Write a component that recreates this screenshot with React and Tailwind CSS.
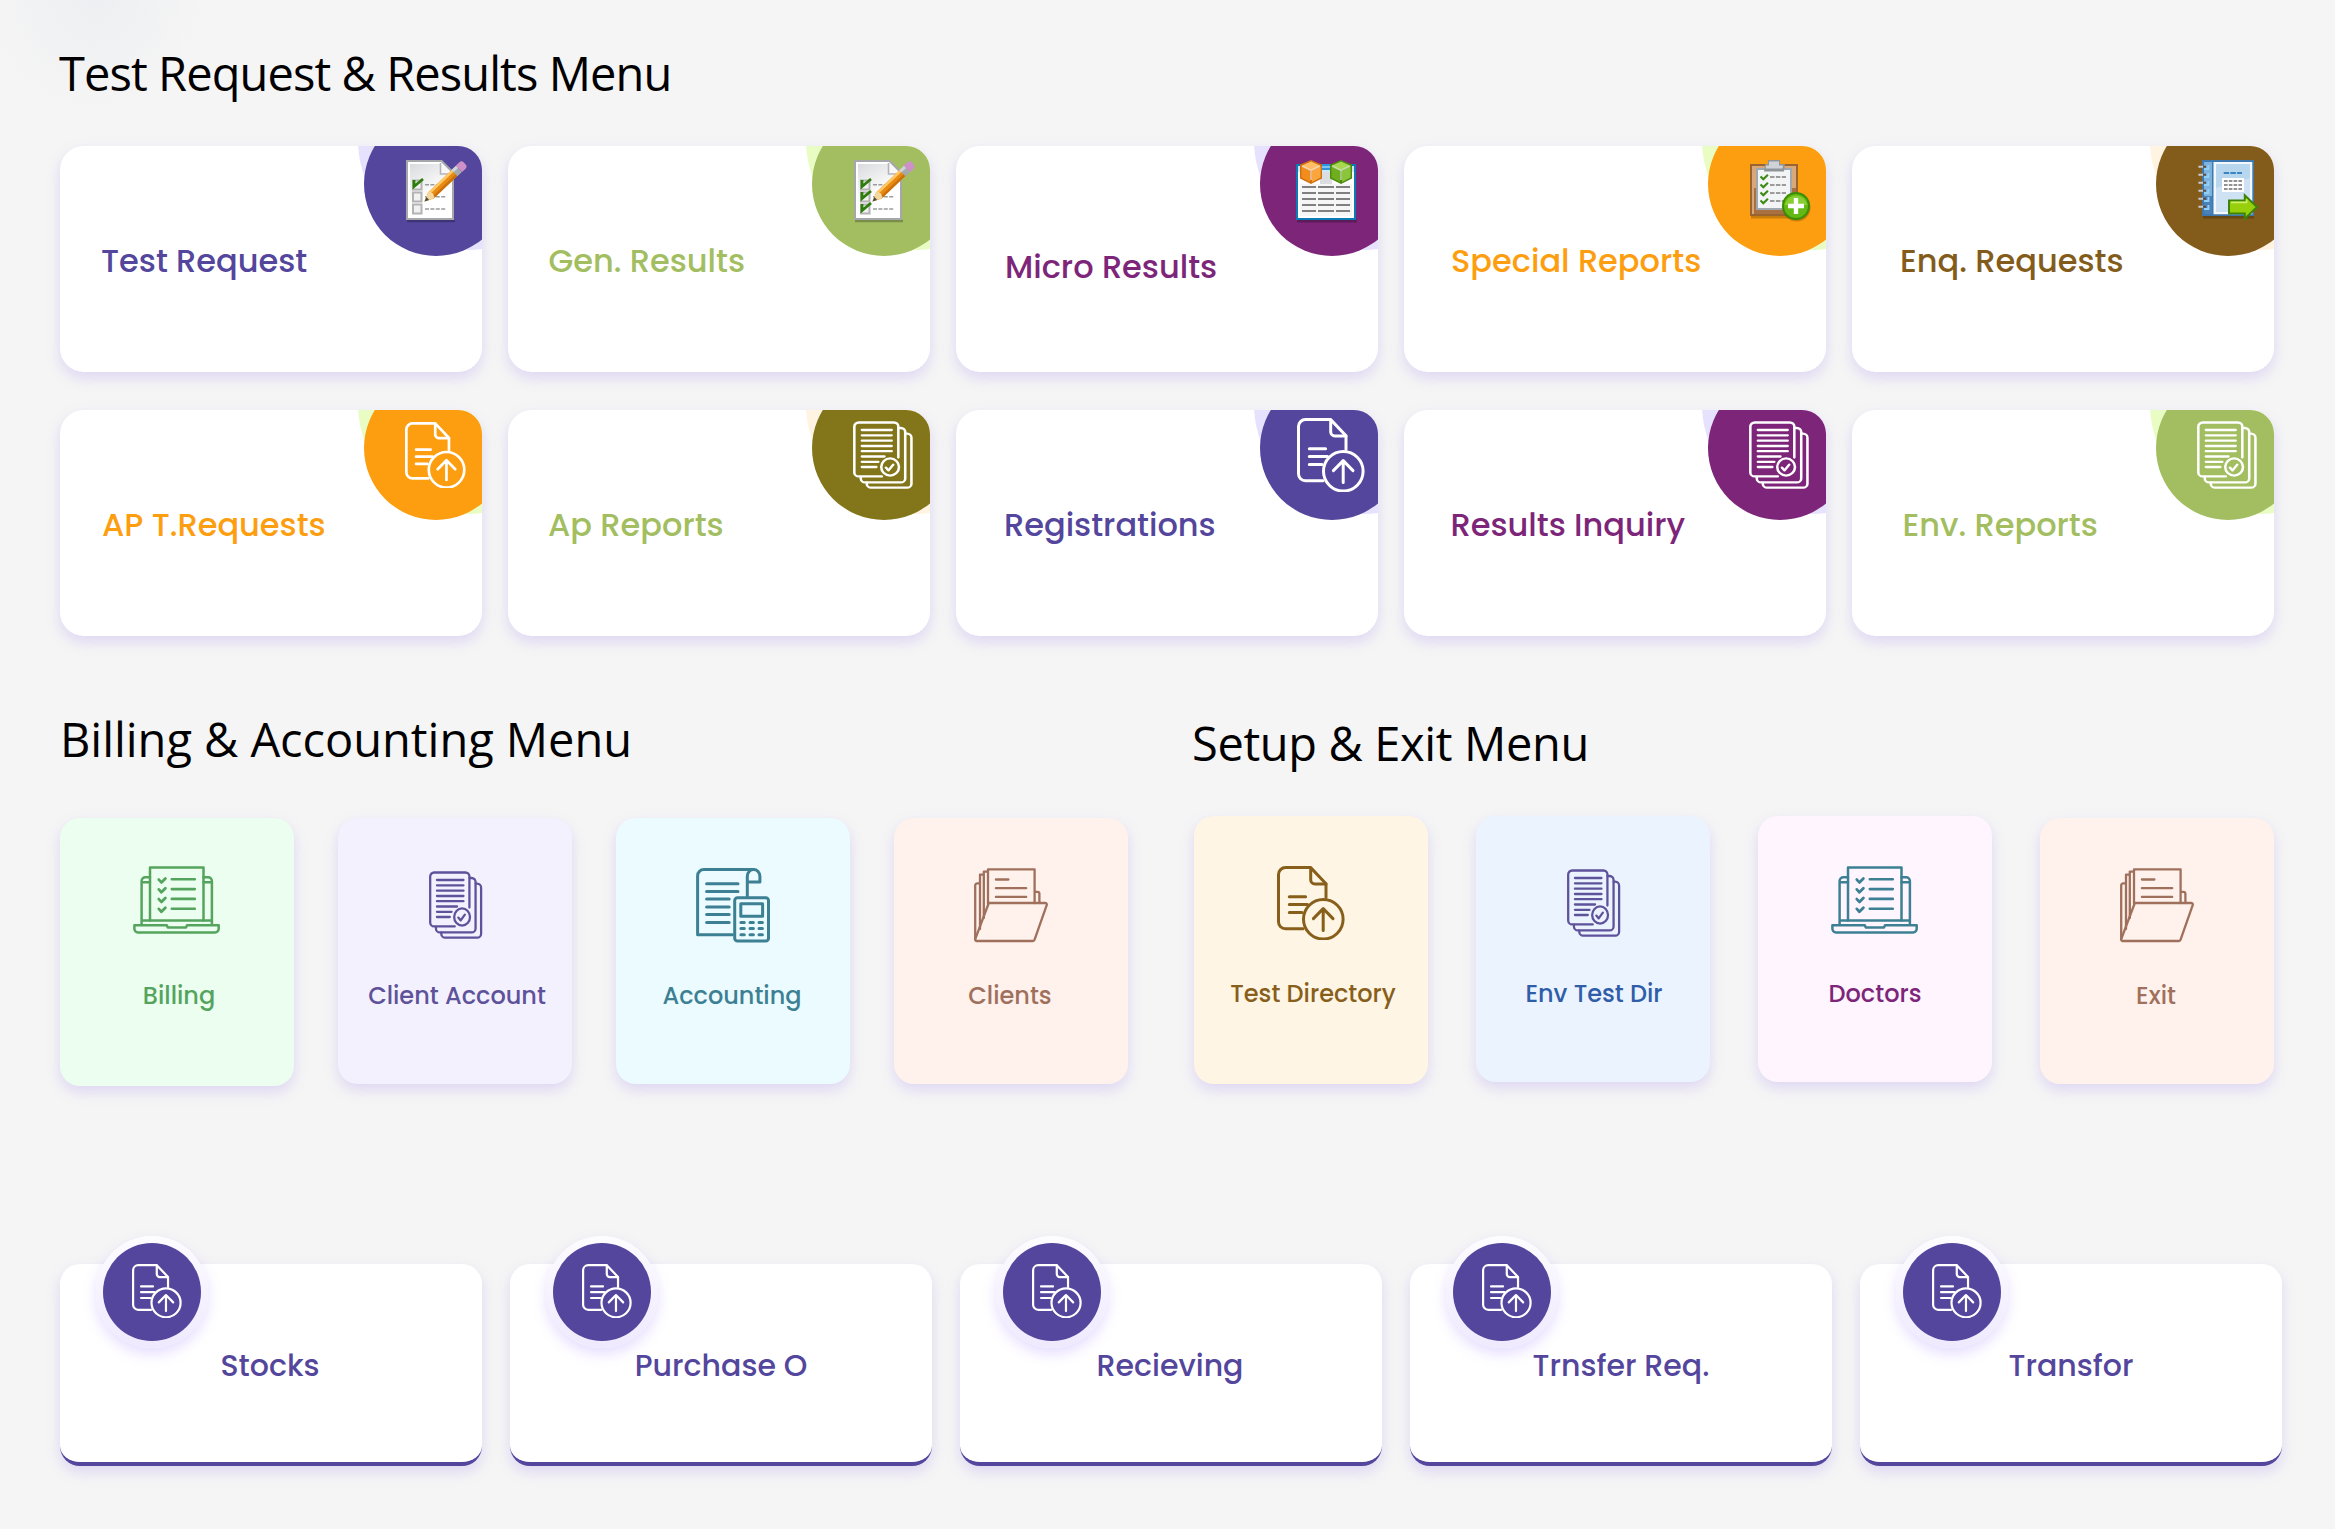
import React from "react";

/* ---------- Line icons ---------- */

function UploadDoc({ className }) {
  return (
    <svg viewBox="0 0 68 74" preserveAspectRatio="none" fill="none" stroke="currentColor" strokeWidth="3" strokeLinecap="round" strokeLinejoin="round" className={className}>
      <path d="M26 62.8H8.5a7 7 0 0 1-7-7V8.6a7 7 0 0 1 7-7h25.2L49 17.8V31.5" />
      <path d="M33.7 2v11.8a4.2 4.2 0 0 0 4.2 4.2H49" />
      <path d="M12.3 30.7H28.6M12.3 38.6H30.5M12.3 46.6H25" />
      <circle cx="46.3" cy="53.2" r="19.8" />
      <path d="M46.2 64.5V43M36.4 52.6 46.2 42.6 56 52.6" />
    </svg>
  );
}

function StackedDocs({ className }) {
  return (
    <svg viewBox="0 0 54 68" preserveAspectRatio="none" fill="none" stroke="currentColor" strokeWidth="2.3" strokeLinecap="round" strokeLinejoin="round" className={className}>
      <path d="M26 55.4H5.2a4 4 0 0 1-4-4V5.5a4 4 0 0 1 4-4h31.6a4 4 0 0 1 4 4V36.6" />
      <path d="M41 7h2a4 4 0 0 1 4 4v46.4a4 4 0 0 1-4 4H11a4 4 0 0 1-4-4v-1.6" />
      <path d="M47.2 12.7h1.4a4 4 0 0 1 4 4v46a4 4 0 0 1-4 4H16.4a4 4 0 0 1-4-4v-1" />
      <path d="M8 9h26.8M8 14.3h26.8M8 19.7h26.8M8 25h26.8M8 30.2h26.8M8 35.5h20.3M8 40.8h14.8M8 46h13" />
      <ellipse cx="33.4" cy="46" rx="8" ry="8.6" />
      <path d="M29.6 46.6l2.4 2.8 4.2-5.8" />
    </svg>
  );
}

function LaptopList({ className }) {
  return (
    <svg viewBox="0 0 87 68" fill="none" stroke="currentColor" strokeWidth="2.5" strokeLinecap="round" strokeLinejoin="round" className={className}>
      <path d="M17 54.5V1.4H70.5V54.5" />
      <path d="M17 11.2h-4.6a3.8 3.8 0 0 0-3.8 3.8V58.7M70.5 11.2h4.6a3.8 3.8 0 0 1 3.8 3.8V58.7M8.6 16.3H17M70.5 16.3h8.4M8.6 54.5H78.9" />
      <path d="M1.4 59.2H33.8l1 2.2H53l1-2.2H85.7v3.6a3.6 3.6 0 0 1-3.6 3.6H5a3.6 3.6 0 0 1-3.6-3.6z" />
      <path d="M25.8 13.6l2.6 2.8 4-4M25.8 23.4l2.6 2.8 4-4M25.8 33.1l2.6 2.8 4-4M25.8 42.9l2.6 2.8 4-4" strokeWidth="2.8" />
      <path d="M38.8 13.3h23M38.8 23.1h23M38.8 32.9h23M38.8 42.7h23" strokeWidth="2.6" />
    </svg>
  );
}

function LedgerCalculator({ className }) {
  return (
    <svg viewBox="0 0 74 75" fill="none" stroke="currentColor" strokeWidth="3" strokeLinecap="round" strokeLinejoin="round" className={className}>
      <path d="M36.5 66.8H1.6V7.8a6.2 6.2 0 0 1 6.2-6.2H57.6" />
      <path d="M51.3 28V8.2a6.3 6.6 0 0 1 12.6 0V14H51.6" />
      <path d="M10.6 15.7H42M10.6 23.4H42M10.6 31.1h22.6M10.6 38.9h22.6M10.6 46.6h22.6M10.6 54.4h22.6" />
      <rect x="38.7" y="29.8" width="33.8" height="43.2" rx="2.8" />
      <rect x="44.8" y="35.8" width="21.8" height="12.4" />
      <path d="M44.9 54.4h3.4M54 54.4h3.4M63 54.4h3.4M44.9 60.5h3.4M54 60.5h3.4M63 60.5h3.4M44.9 66.7h3.4M54 66.7h3.4M63 66.7h3.4" />
    </svg>
  );
}

function OpenFolder({ className }) {
  return (
    <svg viewBox="0 0 74 75" fill="none" stroke="currentColor" strokeWidth="2.3" strokeLinejoin="round" strokeLinecap="round" className={className}>
      <path d="M14 36V1.4H60.6V35" />
      <path d="M13 3.6H9.8V50M9 6.6H6V61M5 15.4H3.2a2 2 0 0 0-2 2V71" />
      <path d="M61 23.8h2.4a2 2 0 0 1 2 2V35" />
      <path d="M14.8 35H71.2a1.6 1.6 0 0 1 1.5 2.2L60.6 71.6a2 2 0 0 1-1.8 1.4H2.8a1.6 1.6 0 0 1-1.5-2.2z" />
      <path d="M21.9 11.5H34.4M21.9 20.2H52.2M21.9 28.9H52.2" />
    </svg>
  );
}

/* ---------- Colour icons ---------- */

function Pencil() {
  return (
    <g transform="translate(20.5 43.5) rotate(-43.5) scale(0.98)">
      <path d="M0 0 9-4.2H46V4.2H9z" fill="#e88a12" />
      <path d="M9-4.2H44v2.6H8z" fill="#ffc765" />
      <path d="M9 1.8H44V4.2H9z" fill="#c9700b" />
      <path d="M0 0 10-4.4 12 0 10 4.4z" fill="#f3d9a0" />
      <path d="M0 0 4.6-2.1V2.1z" fill="#4b4b3c" />
      <path d="M42-4.4h6.5v8.8H42z" fill="#a3a9ae" />
      <path d="M42-4.4h6.5v3.2H42z" fill="#d0d4d8" />
      <path d="M48.5-4.6h4.6a3.4 3.4 0 0 1 3.4 3.4v2.4a3.4 3.4 0 0 1-3.4 3.4h-4.6z" fill="#cf8fc9" />
    </g>
  );
}

function Checklist({ checked, className }) {
  return (
    <svg viewBox="0 0 64 64" className={className}>
      <defs>
        <linearGradient id={`sheet${checked}`} x1="0" y1="0" x2="0.4" y2="1">
          <stop offset="0" stopColor="#dadbdd" />
          <stop offset="0.7" stopColor="#ffffff" />
        </linearGradient>
      </defs>
      <path d="M3 63H51" stroke="#000" strokeOpacity="0.25" strokeWidth="2.5" />
      <path d="M2 2H38L50 14V62H2z" fill="#a6a7aa" />
      <path d="M4 4H37L48 15V60H4z" fill="#fff" />
      <path d="M6 6H36L46 16V58H6z" fill={`url(#sheet${checked})`} />
      <path d="M36.5 5v11H48" fill="#f7f7f7" stroke="#b4b4b7" strokeWidth="1.6" />
      <path d="M21 26.7H42M21 38.7H42M21 51H42" stroke="#9c9c9c" strokeWidth="1.6" strokeDasharray="4 1.4" />
      {[22.5, 34.5, 46.5].map((y, i) => (
        <g key={y}>
          <rect x="9" y={y} width="8.5" height="9" fill="#f1f1f1" stroke="#b3b3b3" strokeWidth="2" />
          {i < checked && <path d={`M10 ${y - 0.5} V${y + 6} L19 ${y - 1.5}`} fill="none" stroke="#2d7d0b" strokeWidth="2.8" />}
        </g>
      ))}
      <Pencil />
    </svg>
  );
}

const ChecklistOne = (p) => <Checklist checked={1} {...p} />;
const ChecklistAll = (p) => <Checklist checked={3} {...p} />;

function Cube({ x, top, left, right, edge }) {
  return (
    <g transform={`translate(${x} 0)`}>
      <path d="M11 2 22 6.5V20.5L11 26 0 20.5V6.5z" fill={edge} />
      <path d="M11 3.4 20 7.4 11 12 2 7.4z" fill={top} />
      <path d="M1.4 8.6 10 12.8V24L1.4 19.6z" fill={left} />
      <path d="M20.6 8.6 12 12.8V24l8.6-4.4z" fill={right} />
      <path d="M2 8 11 12.4 20 8M11 12.4V22" fill="none" stroke="#fff" strokeOpacity="0.65" strokeWidth="1.5" />
    </g>
  );
}

function DataSheet({ className }) {
  return (
    <svg viewBox="0 0 64 64" className={className}>
      <path d="M-3 63H57" stroke="#000" strokeOpacity="0.25" strokeWidth="3" />
      <path d="M-4 6H56V62H-4z" fill="#0c7ab3" />
      <path d="M-2 8H54V60H-2z" fill="#fff" />
      <path d="M-2 8H54v6H-2z" fill="#cfe6fa" />
      <path d="M22 6h8v6h-8z" fill="#2b94dc" />
      <path d="M22 8h8v2h-8z" fill="#7cc4f4" />
      <path d="M20 14H32V26H20z" fill="#dcdde0" />
      <path d="M0 26H52V58H0z" fill="#f6f6f6" />
      {[29, 35, 41, 47, 53].map((y) => (
        <path key={y} d={`M2 ${y}H16M18 ${y}H34M36 ${y}H50`} stroke="#808080" strokeWidth="2.2" />
      ))}
      <Cube x={0} edge="#d0710d" top="#ffbd66" left="#f28c1c" right="#fba63c" />
      <Cube x={30} edge="#4c8a0d" top="#a8d750" left="#6fae1c" right="#8bc53a" />
    </svg>
  );
}

function ClipboardAdd({ className }) {
  return (
    <svg viewBox="0 0 64 64" className={className}>
      <path d="M3 59H50" stroke="#000" strokeOpacity="0.2" strokeWidth="3" />
      <path d="M2 6H50V58H2z" fill="#9a6430" />
      <path d="M4 8H48V56H4z" fill="#d9a878" />
      <path d="M6 30H48V56H6z" fill="#a8713f" />
      <path d="M8 10H44V52H8z" fill="#9fa7b0" />
      <path d="M10 12H42V50H10z" fill="#f3f4f5" />
      <path d="M20 2h12v4h5l-1 7.5H16L17 6h3z" fill="#8f949a" />
      <path d="M21 3.4h10v4h4l-.4 3H17.6l.4-3H21z" fill="#cfd3d7" />
      {[19, 27, 35, 43].map((y) => (
        <g key={y} fill="none">
          <path d={`M12.5 ${y - 0.5}l2.8 2.8 4.6-4.6`} stroke="#3b8a12" strokeWidth="2.1" />
          <path d={`M22 ${y}H38`} stroke="#9b9b9b" strokeWidth="1.8" strokeDasharray="4.5 1.4" />
        </g>
      ))}
      <circle cx="48.6" cy="49.6" r="14" fill="#000" fillOpacity="0.2" />
      <circle cx="48" cy="48" r="14" fill="#3d8d04" />
      <circle cx="48" cy="48" r="12" fill="#63b813" />
      <path d="M36.6 47a11.6 11.6 0 0 1 22.8 0z" fill="#86ce32" />
      <path d="M48 40V56M40 48H56" stroke="#fff" strokeWidth="4.4" />
    </svg>
  );
}

function NotebookSend({ className }) {
  return (
    <svg viewBox="0 0 64 64" className={className}>
      <path d="M7 59H58" stroke="#000" strokeOpacity="0.22" strokeWidth="3" />
      <path d="M6 2H58V58H6z" fill="#3f78ae" />
      <path d="M8 4H16V56H8z" fill="#7db2dc" />
      <path d="M8 38H16V56H8z" fill="#4a82b8" />
      <path d="M17.5 4H56.3V56.2H17.5z" fill="#f2f8fd" />
      <path d="M20 6H54V54H20z" fill="#b9d6ef" />
      <path d="M20 30 54 20V54H20z" fill="#cfe2f4" />
      <path d="M27.7 15H46" stroke="#3a86c4" strokeWidth="2.2" strokeDasharray="5.5 1.2" />
      <path d="M26 20H48V34H26z" fill="#fff" />
      <path d="M28 23H46M28 27H46M28 31H46" stroke="#6d6d6d" strokeWidth="1.6" strokeDasharray="3.6 1.2" />
      {[8.7, 16.7, 24.7, 32.7, 40.7, 48.7].map((y) => (
        <g key={y}>
          <path d={`M8 ${y + 2.2}h4.4v-4`} fill="none" stroke="#8fd0f5" strokeWidth="2" />
          <path d={`M2.4 ${y}H8`} stroke="#c9ccd0" strokeWidth="2" />
          <path d={`M7 ${y}H10`} stroke="#5a4a44" strokeWidth="2" />
        </g>
      ))}
      <path d="M33 42.4H48.8V37.4L61 49 48.8 60.6V55.4H33z" fill="#98cf0c" stroke="#3d8304" strokeWidth="2" />
      <path d="M35 44.4H50.6V41.2" fill="none" stroke="#cdee6a" strokeWidth="1.6" />
    </svg>
  );
}

/* ---------- Data ---------- */

const LILAC = "bg-[#e6e2fe]";
const LIME = "bg-[#e9fcc4]";
const CREAM = "bg-[#fff3e2]";
const PIXEL = "ml-[40px] mt-[46px] h-[64px] w-[64px] overflow-visible";
const DOCS = "ml-[41px] mt-[45px] h-[68px] w-[60px] text-white";

const requests = [
  { text: "Test Request", label: "pl-[41px] pt-[91px] text-[#53469c]", disc: "bg-[#53469c]", halo: LILAC, Icon: ChecklistOne, icon: PIXEL },
  { text: "Gen. Results", label: "pl-[40.5px] pt-[91px] text-[#a2be60]", disc: "bg-[#a2be60]", halo: LIME, Icon: ChecklistAll, icon: PIXEL },
  { text: "Micro Results", label: "pl-[49px] pt-[97px] text-[#7d2579]", disc: "bg-[#7d2579]", halo: LILAC, Icon: DataSheet, icon: PIXEL },
  { text: "Special Reports", label: "pl-[47px] pt-[91px] text-[#fc9e10]", disc: "bg-[#fc9e10]", halo: LIME, Icon: ClipboardAdd, icon: PIXEL },
  { text: "Enq. Requests", label: "pl-[48px] pt-[91px] text-[#835c1b]", disc: "bg-[#835c1b]", halo: CREAM, Icon: NotebookSend, icon: PIXEL },
  { text: "AP T.Requests", label: "pl-[42px] pt-[91px] text-[#fc9e10]", disc: "bg-[#fc9e10]", halo: LIME, Icon: UploadDoc, icon: "ml-[40.5px] mt-[45.7px] h-[66.5px] w-[61px] text-white" },
  { text: "Ap Reports", label: "pl-[40px] pt-[91px] text-[#a2be60]", disc: "bg-[#83761a]", halo: CREAM, Icon: StackedDocs, icon: DOCS },
  { text: "Registrations", label: "pl-[48px] pt-[91px] text-[#53469c]", disc: "bg-[#53469c]", halo: LILAC, Icon: UploadDoc, icon: "ml-[37.3px] mt-[41.7px] h-[74px] w-[68px] text-white" },
  { text: "Results Inquiry", label: "pl-[46.5px] pt-[91px] text-[#7d2579]", disc: "bg-[#7d2579]", halo: LILAC, Icon: StackedDocs, icon: DOCS },
  { text: "Env. Reports", label: "pl-[50.5px] pt-[91px] text-[#a2be60]", disc: "bg-[#a2be60]", halo: LIME, Icon: StackedDocs, icon: DOCS },
];

const billing = [
  { text: "Billing", card: "h-[268px] bg-[#ecfeef] text-[#55a45e]", Icon: LaptopList, icon: "ml-[73px] mt-[48px] h-[68px] w-[87px]", nudge: "pl-1" },
  { text: "Client Account", card: "h-[266px] bg-[#f3f1fe] text-[#5e529b]", Icon: StackedDocs, icon: "ml-[91px] mt-[53px] h-[68px] w-[53.5px]", nudge: "pl-1" },
  { text: "Accounting", card: "h-[266px] bg-[#ebfbff] text-[#3d8093]", Icon: LedgerCalculator, icon: "ml-[79.7px] mt-[49.7px] h-[75px] w-[74px]", nudge: "pr-0.5" },
  { text: "Clients", card: "h-[266px] bg-[#fff1ec] text-[#9f705c]", Icon: OpenFolder, icon: "ml-[80px] mt-[49.7px] h-[75px] w-[74px]", nudge: "pr-0.5" },
];

const setup = [
  { text: "Test Directory", card: "h-[268px] bg-[#fff5e4] text-[#875f1b]", Icon: UploadDoc, icon: "ml-[83px] mt-[50px] h-[74px] w-[68px]", nudge: "pl-1" },
  { text: "Env Test Dir", card: "h-[266px] bg-[#ebf3ff] text-[#2f5da8]", Icon: StackedDocs, icon: "ml-[91px] mt-[53px] h-[68px] w-[53.5px] text-[#5e529b]", nudge: "pl-0.5" },
  { text: "Doctors", card: "h-[266px] bg-[#fef5ff] text-[#7d2579]", Icon: LaptopList, icon: "ml-[73px] mt-[49.5px] h-[68px] w-[87px] text-[#3d8093]", nudge: "" },
  { text: "Exit", card: "mt-[2px] h-[266px] bg-[#fff1ec] text-[#9f705c]", Icon: OpenFolder, icon: "ml-[80px] mt-[49.7px] h-[75px] w-[74px]", nudge: "pr-0.5" },
];

const stock = [
  { text: "Stocks", nudge: "pr-0.5" },
  { text: "Purchase O", nudge: "" },
  { text: "Recieving", nudge: "pr-0.5" },
  { text: "Trnsfer Req.", nudge: "" },
  { text: "Transfor", nudge: "" },
];

/* ---------- Cards ---------- */

function RequestCard({ text, label, disc, halo, Icon, icon }) {
  return (
    <div className="relative h-[226px] overflow-hidden rounded-[24px] bg-white shadow-[0_6px_14px_rgba(140,110,235,0.22)]">
      <div className={`absolute left-[298px] top-[-116px] size-[220px] rounded-full ${halo}`} />
      <div className={`absolute left-[304px] top-[-34px] size-[144px] rounded-full ${disc}`}>
        <Icon className={icon} />
      </div>
      <div className={`whitespace-nowrap text-[32px] leading-[48px] ${label}`}>{text}</div>
    </div>
  );
}

function MenuCard({ text, card, Icon, icon, nudge }) {
  return (
    <div className={`w-[234px] rounded-[20px] shadow-[0_6px_14px_rgba(140,110,235,0.22)] ${card}`}>
      <div className="flex h-[160px] items-start">
        <Icon className={`shrink-0 ${icon}`} />
      </div>
      <div className={`whitespace-nowrap text-center text-[24px] leading-[36px] ${nudge}`}>{text}</div>
    </div>
  );
}

function StockCard({ text, nudge }) {
  return (
    <div className="relative h-[202px] rounded-[20px] border-b-4 border-[#53469c] bg-white pt-[80px] shadow-[0_6px_14px_rgba(140,110,235,0.22)]">
      <div className="absolute left-[36px] top-[-28px] flex size-[112px] items-center justify-center rounded-full bg-linear-to-b from-[#fdfcff] to-[#efe9fe] shadow-[0_6px_14px_rgba(140,100,255,0.22)]">
        <div className="size-[98px] rounded-full bg-[#53469c]">
          <UploadDoc className="ml-[29px] mt-[21px] h-[54px] w-[50px] text-white" />
        </div>
      </div>
      <div className={`text-center text-[30px] leading-[44px] text-[#53469c] ${nudge}`}>{text}</div>
    </div>
  );
}

const heading = "whitespace-nowrap font-['Segoe_UI','Open_Sans',sans-serif] text-[47px] font-normal leading-[64px] text-black";

export default function App() {
  return (
    <main className="h-[1529px] w-[2335px] overflow-hidden bg-[#f5f5f5] bg-[radial-gradient(circle_at_95px_0px,#eeeff2_0px,#f5f5f5_110px)] pl-[60px] pt-[41px] font-['Poppins',sans-serif] font-medium">
      <section>
        <h1 className={`-ml-px tracking-[-0.91px] ${heading}`}>Test Request &amp; Results Menu</h1>
        <div className="mt-[41px] grid w-[2214px] grid-cols-5 gap-x-[26px] gap-y-[38px]">
          {requests.map((r) => (
            <RequestCard key={r.text} {...r} />
          ))}
        </div>
      </section>

      <div className="mt-[71px] flex h-[379px]">
        <section className="w-[1134px]">
          <h2 className={`tracking-[-0.04px] ${heading}`}>Billing &amp; Accounting Menu</h2>
          <div className="mt-[47px] flex gap-[44px]">
            {billing.map((m) => (
              <MenuCard key={m.text} {...m} />
            ))}
          </div>
        </section>
        <section className="pt-[4px]">
          <h2 className={`-ml-[2px] tracking-[-0.36px] ${heading}`}>Setup &amp; Exit Menu</h2>
          <div className="mt-[41px] flex gap-[48px]">
            {setup.map((m) => (
              <MenuCard key={m.text} {...m} />
            ))}
          </div>
        </section>
      </div>

      <section className="mt-[178px] grid w-[2222px] grid-cols-5 gap-[28px]">
        {stock.map((s) => (
          <StockCard key={s.text} {...s} />
        ))}
      </section>
    </main>
  );
}
